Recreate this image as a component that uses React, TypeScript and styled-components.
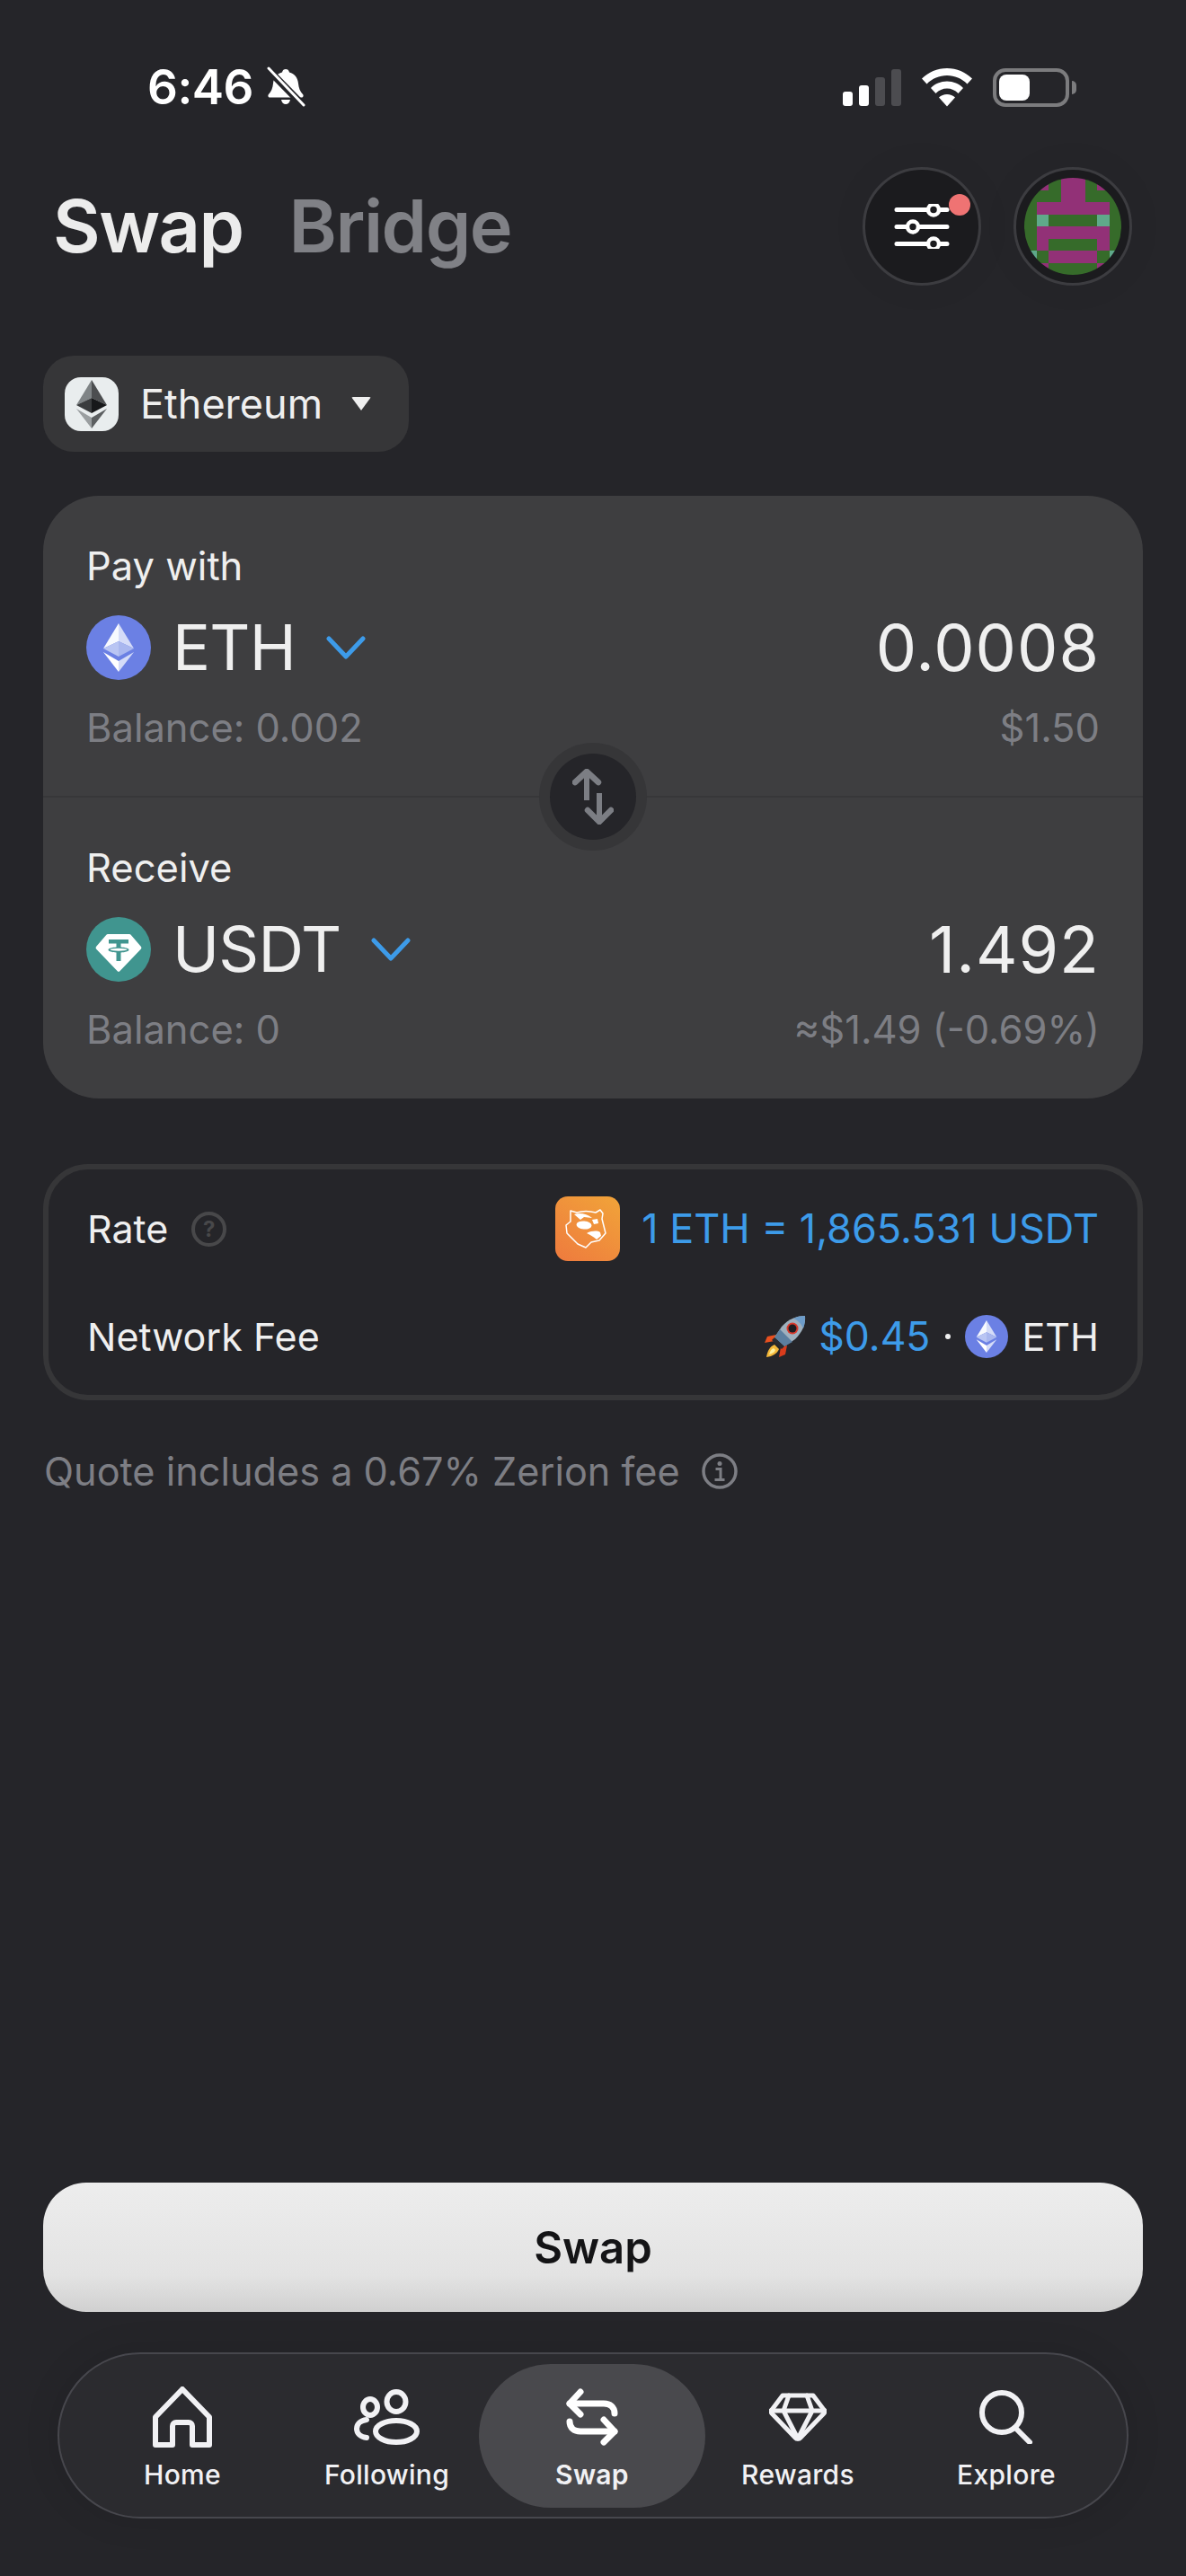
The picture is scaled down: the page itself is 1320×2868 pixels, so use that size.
import React from "react";
import styled, { createGlobalStyle } from "styled-components";

const Global = createGlobalStyle`
  html, body { margin: 0; padding: 0; background: #252529; }
  * { box-sizing: border-box; }
`;

const BLUE = "#3d9be9";
const GREY = "#7d7e84";
const LIGHT = "#efefef";

const Page = styled.div`
  width: 1320px;
  height: 2868px;
  background: #252529;
  display: flex;
  flex-direction: column;
  font-family: Inter, "Liberation Sans", sans-serif;
  color: ${LIGHT};
  overflow: hidden;
`;

/* status bar */
const StatusBar = styled.div`
  height: 186px;
  padding: 8px 122px 0 164px;
  display: flex;
  align-items: center;
  justify-content: space-between;
`;
const TimeGroup = styled.div`
  display: flex;
  align-items: center;
  gap: 14px;
`;
const Time = styled.span`
  font-size: 53px;
  line-height: 44px;
  font-weight: 600;
  color: #fff;
  letter-spacing: -0.5px;
`;
const StatusIcons = styled.div`
  display: flex;
  align-items: center;
  gap: 22px;
`;
const Signal = styled.div`
  display: flex;
  align-items: flex-end;
  gap: 7px;
  height: 42px;
  margin-top: -1px;
`;
const SignalBar = styled.i<{ $h: number; $on?: boolean }>`
  display: block;
  width: 11px;
  height: ${(p) => p.$h}px;
  border-radius: 3px;
  background: ${(p) => (p.$on ? "#fff" : "#4c4c50")};
`;
const Battery = styled.div`
  display: flex;
  align-items: center;
  gap: 3px;
`;
const BatteryBody = styled.div`
  width: 85px;
  height: 43px;
  border: 4px solid #7c7c7e;
  border-radius: 14px;
  padding: 3px;
`;
const BatteryFill = styled.div`
  width: 34px;
  height: 29px;
  border-radius: 8px;
  background: #fff;
`;
const BatteryCap = styled.div`
  width: 5px;
  height: 15px;
  border-radius: 0 5px 5px 0;
  background: #7c7c7e;
`;

/* header */
const Header = styled.div`
  height: 132px;
  padding: 0 60px 0 59px;
  display: flex;
  align-items: center;
  justify-content: space-between;
`;
const Tabs = styled.div`
  display: flex;
  align-items: center;
  gap: 51px;
`;
const Tab = styled.span<{ $active?: boolean }>`
  font-size: 81px;
  line-height: 96px;
  font-weight: 600;
  letter-spacing: -1.5px;
  color: ${(p) => (p.$active ? "#ececec" : "#808186")};
`;
const HeaderActions = styled.div`
  display: flex;
  gap: 36px;
`;
const RoundButton = styled.div`
  position: relative;
  width: 132px;
  height: 132px;
  border-radius: 50%;
  background: #1b1b1e;
  border: 3px solid #3c3c40;
  display: flex;
  align-items: center;
  justify-content: center;
  box-shadow: 0 0 40px rgba(0, 0, 0, 0.06);
`;
const RedDot = styled.span`
  position: absolute;
  top: 27px;
  right: 9px;
  width: 24px;
  height: 24px;
  border-radius: 50%;
  background: #ef7373;
`;

/* chain pill */
const ChainPill = styled.div`
  margin: 78px 0 0 48px;
  width: 407px;
  height: 107px;
  border-radius: 34px;
  background: #363638;
  display: flex;
  align-items: center;
  padding-left: 24px;
`;
const ChainIcon = styled.div`
  width: 60px;
  height: 60px;
  border-radius: 18px;
  background: #e9edee;
  display: flex;
  align-items: center;
  justify-content: center;
`;
const ChainName = styled.span`
  margin-left: 24px;
  font-size: 45px;
  line-height: 54px;
  font-weight: 400;
  color: #efefef;
`;
const Caret = styled.i`
  display: block;
  margin-left: 32px;
  width: 0;
  height: 0;
  border-left: 11px solid transparent;
  border-right: 11px solid transparent;
  border-top: 15px solid #efefef;
  border-radius: 2px;
`;

/* swap card */
const Card = styled.div`
  position: relative;
  margin: 49px 48px 0;
  height: 671px;
  border-radius: 62px;
  background: #3e3e40;
  display: flex;
  flex-direction: column;
`;
const Section = styled.div<{ $first?: boolean }>`
  height: ${(p) => (p.$first ? 336 : 335)}px;
  padding: 51px 48px 0 48px;
  border-bottom: ${(p) => (p.$first ? "2px solid #373739" : "none")};
  display: flex;
  flex-direction: column;
`;
const Label = styled.div`
  font-size: 43.5px;
  line-height: 54px;
  height: 54px;
  color: #efefef;
`;
const TokenRow = styled.div`
  margin-top: 28px;
  height: 72px;
  display: flex;
  align-items: center;
  justify-content: space-between;
`;
const TokenLeft = styled.div`
  display: flex;
  align-items: center;
`;
const TokenName = styled.span`
  margin-left: 24px;
  font-size: 70px;
  line-height: 72px;
  font-weight: 400;
  letter-spacing: -0.8px;
  color: #efefef;
`;
const Chevron = styled.svg`
  margin-left: 34px;
  width: 44px;
  height: 28px;
`;
const Amount = styled.span`
  font-size: 72px;
  line-height: 72px;
  font-weight: 400;
  letter-spacing: 1px;
  color: #efefef;
`;
const SubRow = styled.div`
  margin-top: 26px;
  height: 54px;
  display: flex;
  align-items: center;
  justify-content: space-between;
  font-size: 43.5px;
  line-height: 54px;
  color: ${GREY};
`;
const SwitchButton = styled.div`
  position: absolute;
  left: 552px;
  top: 275px;
  width: 120px;
  height: 120px;
  border-radius: 50%;
  background: #363638;
  display: flex;
  align-items: center;
  justify-content: center;
`;
const SwitchInner = styled.div`
  width: 96px;
  height: 96px;
  border-radius: 50%;
  background: #252529;
  display: flex;
  align-items: center;
  justify-content: center;
`;

/* rate box */
const InfoBox = styled.div`
  margin: 73px 48px 0;
  height: 263px;
  border: 6px solid #363638;
  border-radius: 50px;
  padding: 30px 43px 0 43px;
  display: flex;
  flex-direction: column;
  gap: 48px;
`;
const InfoRow = styled.div`
  height: 72px;
  display: flex;
  align-items: center;
  justify-content: space-between;
  font-size: 43px;
  line-height: 54px;
`;
const InfoLabel = styled.div`
  display: flex;
  align-items: center;
  gap: 26px;
  color: #efefef;
`;
const QuestionMark = styled.div`
  width: 39px;
  height: 39px;
  border: 4px solid #48484a;
  border-radius: 50%;
  color: #48484a;
  font-size: 24px;
  line-height: 31px;
  font-weight: 700;
  text-align: center;
`;
const InfoValue = styled.div`
  display: flex;
  align-items: center;
`;
const ProviderLogo = styled.div`
  width: 72px;
  height: 72px;
  border-radius: 14px;
  margin-right: 24px;
  background: linear-gradient(35deg, #ee7a3e, #f1a439);
  display: flex;
  align-items: center;
  justify-content: center;
`;
const BlueText = styled.span<{ $size: number }>`
  color: ${BLUE};
  font-size: ${(p) => p.$size}px;
`;
const Dot = styled.i`
  display: block;
  width: 6px;
  height: 6px;
  border-radius: 50%;
  background: #efefef;
  margin: 0 16px 0 17px;
`;
const FeeEth = styled.span`
  margin-left: 15px;
  color: #efefef;
`;
const Quote = styled.div`
  margin: 52px 48px 0 49px;
  display: flex;
  align-items: center;
  gap: 24px;
  font-size: 43.25px;
  line-height: 54px;
  color: ${GREY};
`;
const Spacer = styled.div`
  flex: 1;
`;

/* bottom */
const PrimaryButton = styled.div`
  margin: 0 48px;
  height: 144px;
  border-radius: 48px;
  background: linear-gradient(180deg, #ededed 0%, #e3e3e3 72%, #d0d0d0 100%);
  display: flex;
  align-items: center;
  justify-content: center;
  font-size: 49px;
  font-weight: 600;
  color: #141416;
`;
const Nav = styled.div`
  margin: 45px 64px 64px 64px;
  height: 185px;
  border-radius: 93px;
  background: #2b2b2f;
  border: 2px solid #47474d;
  box-shadow: 0 0 40px rgba(0, 0, 0, 0.1);
  display: grid;
  grid-template-columns: 274px 193px 252px 206px 1fr;
  padding: 11px 0 0 0;
  align-items: start;
`;
const NavItem = styled.div<{ $active?: boolean; $shift?: number }>`
  height: 160px;
  border-radius: 80px;
  padding-right: ${(p) => p.$shift ?? 0}px;
  background: ${(p) => (p.$active ? "#49494d" : "transparent")};
  display: flex;
  flex-direction: column;
  align-items: center;
  color: #f1f1f4;
`;
const NavIconBox = styled.div`
  margin-top: 23px;
  height: 72px;
  display: flex;
  align-items: center;
  justify-content: center;
`;
const NavLabel = styled.span<{ $active?: boolean }>`
  margin-top: 10px;
  font-size: 30px;
  line-height: 36px;
  letter-spacing: 0.3px;
  font-weight: ${(p) => (p.$active ? 600 : 500)};
`;

const EthCoin = ({ size }: { size: number }) => (
  <svg width={size} height={size} viewBox="0 0 72 72" style={{ flex: "none" }}>
    <circle cx="36" cy="36" r="36" fill="#6b80e4" />
    <polygon points="36,9 36,29 19,37" fill="#fff" opacity=".95" />
    <polygon points="36,9 36,29 53,37" fill="#d5dcf8" />
    <polygon points="36,29 19,37 36,46" fill="#b9c5f3" />
    <polygon points="36,29 53,37 36,46" fill="#a9b7ef" />
    <polygon points="19,41 36,51 36,63" fill="#fff" />
    <polygon points="53,41 36,51 36,63" fill="#d5dcf8" />
  </svg>
);

const TetherCoin = () => (
  <svg width="72" height="72" viewBox="0 0 72 72" style={{ flex: "none" }}>
    <circle cx="36" cy="36" r="36" fill="#40958f" />
    <path d="M24 19h24a2 2 0 0 1 1.600.800L61 33a2 2 0 0 1 0 2.400L37.500 60a2 2 0 0 1-3 0L11 35.400a2 2 0 0 1 0-2.400l11.400-13.200A2 2 0 0 1 24 19z" fill="#fff" />
    <path d="M25 25h22v4.500h-8.500v4c5 .3 9 1.300 9 3s-4 2.700-9 3V49h-5V39.500c-5-.3-9-1.300-9-3s4-2.700 9-3v-4H25z" fill="#40958f" />
    <ellipse cx="36" cy="36.200" rx="9.500" ry="1.500" fill="#fff" />
  </svg>
);

const ChevronDown = () => (
  <Chevron viewBox="0 0 44 28">
    <path d="M3 4l19 20L41 4" fill="none" stroke={BLUE} strokeWidth="5" strokeLinecap="round" strokeLinejoin="round" />
  </Chevron>
);

const AVATAR = ["GMGMMGMG", "GGGMMGGG", "GMMMMMMG", "GTGGGGTG", "GMMMMMMG", "GMGGGGMG", "TGMMMMGT", "GMGGGGMG"];
const AV_COL: Record<string, string> = { G: "#366b2a", M: "#923177", T: "#5fa98a" };

const Avatar = () => (
  <svg width="108" height="108" viewBox="0 0 8 8" shapeRendering="crispEdges">
    <defs>
      <clipPath id="avClip">
        <circle cx="4" cy="4" r="4" />
      </clipPath>
    </defs>
    <g clipPath="url(#avClip)">
      {AVATAR.flatMap((row, y) =>
        row.split("").map((c, x) => <rect key={`${x}-${y}`} x={x} y={y} width="1.010" height="1.010" fill={AV_COL[c]} />)
      )}
    </g>
  </svg>
);

const Rocket = () => (
  <svg width="48" height="48" viewBox="0 0 48 48" style={{ marginRight: 13 }}>
    <path d="M14 22L4 24l-3 7 11-2z" fill="#e8501f" />
    <path d="M26 34l-2 10-7 3 2-11z" fill="#d93c1c" />
    <path d="M12 33c-5 2-8 7-9 14 7-1 12-4 14-9z" fill="#f6b93a" />
    <path d="M11 37c-3 1-4 4-5 7 3-1 6-2 7-5z" fill="#fdf0a0" />
    <path d="M46 1c-9 0-18 3-26 12l-8 12 11 10 12-8c8-8 12-17 11-26z" fill="#9fb0bd" />
    <path d="M46 1c-5 0-9 1-13 3 5 2 9 6 11 11 2-5 2-10 2-14z" fill="#6d9cc9" />
    <path d="M12 25l6-9 14 14-9 5z" fill="#5c7f9f" />
    <circle cx="32" cy="15" r="6.500" fill="#d8392b" />
    <circle cx="32" cy="15" r="4.500" fill="#1c1c20" />
    <path d="M12 25l11 10-3 3-11-10z" fill="#2b2b30" />
  </svg>
);

const Panther = () => (
  <svg width="50" height="50" viewBox="0 0 50 50">
    <path d="M6 5l7 2c6-2 14-2 21 0l5-3 3 4-1 6 4 16-7 8-9 2-6 6-9-4-12-12-1-9 5-4z" fill="none" stroke="#fff" strokeWidth="1.500" strokeLinejoin="round" />
    <path d="M10 9c6-2 14-1 20 4l-9-1-4 3z" fill="#fff" />
    <ellipse cx="21" cy="21" rx="8.500" ry="4.500" fill="#fff" transform="rotate(5 21 21)" />
    <path d="M24 30c6-3 12-3 15-1l1 4-5 4c-3-3-7-5-11-7z" fill="#fff" />
    <path d="M30 15l6-1 1 5-5 1z" fill="#fff" />
  </svg>
);

export default function App() {
  return (
    <Page>
      <Global />
      <StatusBar>
        <TimeGroup>
          <Time>6:46</Time>
          <svg width="44" height="46" viewBox="0 0 44 46">
            <path d="M22 3c2 0 3.500 1 4 3.500 6 1.500 9.500 6.500 10 12.500.5 5 2 9 5 12 1.200 1.200.5 3.500-1 3.500H4c-1.500 0-2.200-2.300-1-3.500 3-3 4.500-7 5-12 .5-6 4-11 10-12.500C18.500 4 20 3 22 3z" fill="#fff" />
            <path d="M17 37h10c-.5 3-2.500 5-5 5s-4.500-2-5-5z" fill="#fff" />
            <path d="M2 3l40 41" stroke="#252529" strokeWidth="8" />
            <path d="M3 2l39 41" stroke="#fff" strokeWidth="3" strokeLinecap="round" />
          </svg>
        </TimeGroup>
        <StatusIcons>
          <Signal>
            <SignalBar $h={16} $on />
            <SignalBar $h={23} $on />
            <SignalBar $h={32} />
            <SignalBar $h={41} />
          </Signal>
          <svg width="58" height="43" viewBox="0 0 58 43">
            <path d="M29 0C18 0 8.500 4.300 1 11.500l5.500 6C12.500 11.500 20.500 8 29 8s16.500 3.500 22.500 9.500l5.500-6C49.500 4.300 40 0 29 0z" fill="#fff" />
            <path d="M29 14.500c-7 0-13.500 2.800-18 7.400l5.500 6C20 24.500 24.300 22.500 29 22.500s9 2 12.500 5.400l5.500-6c-4.500-4.600-11-7.400-18-7.400z" fill="#fff" />
            <path d="M29 29c-3.500 0-6.700 1.300-9 3.600L29 42.500l9-9.900C35.700 30.300 32.500 29 29 29z" fill="#fff" />
          </svg>
          <Battery>
            <BatteryBody>
              <BatteryFill />
            </BatteryBody>
            <BatteryCap />
          </Battery>
        </StatusIcons>
      </StatusBar>

      <Header>
        <Tabs>
          <Tab $active>Swap</Tab>
          <Tab>Bridge</Tab>
        </Tabs>
        <HeaderActions>
          <RoundButton>
            <svg width="62" height="50" viewBox="0 0 62 50">
              <g stroke="#fff" strokeWidth="5" strokeLinecap="round" fill="none">
                <path d="M3 6.500h56M3 25.500h56M3 44.500h56" />
              </g>
              <g stroke="#fff" strokeWidth="4.500" fill="#1b1b1e">
                <circle cx="44" cy="6.500" r="6" />
                <circle cx="21" cy="25.500" r="6" />
                <circle cx="44" cy="44.500" r="6" />
              </g>
            </svg>
            <RedDot />
          </RoundButton>
          <RoundButton>
            <Avatar />
          </RoundButton>
        </HeaderActions>
      </Header>

      <ChainPill>
        <ChainIcon>
          <svg width="36" height="56" viewBox="0 0 36 56">
            <polygon points="18,1 18,21 1,29" fill="#7f8486" />
            <polygon points="18,1 18,21 35,29" fill="#4c4e50" />
            <polygon points="18,21 1,29 18,38" fill="#3a3c3e" />
            <polygon points="18,21 35,29 18,38" fill="#17181a" />
            <polygon points="1,33 18,43 18,55" fill="#9a9ea0" />
            <polygon points="35,33 18,43 18,55" fill="#5c5f61" />
          </svg>
        </ChainIcon>
        <ChainName>Ethereum</ChainName>
        <Caret />
      </ChainPill>

      <Card>
        <Section $first>
          <Label>Pay with</Label>
          <TokenRow>
            <TokenLeft>
              <EthCoin size={72} />
              <TokenName>ETH</TokenName>
              <ChevronDown />
            </TokenLeft>
            <Amount>0.0008</Amount>
          </TokenRow>
          <SubRow>
            <span>Balance: 0.002</span>
            <span>$1.50</span>
          </SubRow>
        </Section>
        <Section>
          <Label>Receive</Label>
          <TokenRow>
            <TokenLeft>
              <TetherCoin />
              <TokenName>USDT</TokenName>
              <ChevronDown />
            </TokenLeft>
            <Amount>1.492</Amount>
          </TokenRow>
          <SubRow>
            <span>Balance: 0</span>
            <span>≈$1.49 (-0.69%)</span>
          </SubRow>
        </Section>
        <SwitchButton>
          <SwitchInner>
            <svg width="46" height="62" viewBox="0 0 46 62">
              <g fill="none" stroke="#7c7e84" strokeWidth="6.500" strokeLinejoin="round" strokeLinecap="round">
                <path d="M3 15L16 3l13 12" />
                <path d="M17 46l13 13 13-13" />
              </g>
              <path d="M13 3h6v32h-6zM27 27h6v30h-6z" fill="#7c7e84" />
            </svg>
          </SwitchInner>
        </SwitchButton>
      </Card>

      <InfoBox>
        <InfoRow>
          <InfoLabel>
            <span>Rate</span>
            <QuestionMark>?</QuestionMark>
          </InfoLabel>
          <InfoValue>
            <ProviderLogo>
              <Panther />
            </ProviderLogo>
            <BlueText $size={45}>1 ETH = 1,865.531 USDT</BlueText>
          </InfoValue>
        </InfoRow>
        <InfoRow>
          <InfoLabel>
            <span>Network Fee</span>
          </InfoLabel>
          <InfoValue>
            <Rocket />
            <BlueText $size={44.5}>$0.45</BlueText>
            <Dot />
            <EthCoin size={48} />
            <FeeEth>ETH</FeeEth>
          </InfoValue>
        </InfoRow>
      </InfoBox>

      <Quote>
        <span>Quote includes a 0.67% Zerion fee</span>
        <svg width="40" height="40" viewBox="0 0 40 40">
          <circle cx="20" cy="20" r="18" fill="none" stroke={GREY} strokeWidth="3.500" />
          <circle cx="20" cy="11.500" r="2.500" fill={GREY} />
          <path d="M15.500 17.500h5.500v11.500M14.500 29.500h11" fill="none" stroke={GREY} strokeWidth="3" />
        </svg>
      </Quote>

      <Spacer />

      <PrimaryButton>Swap</PrimaryButton>

      <Nav>
        <NavItem>
          <NavIconBox>
            <svg width="68" height="68" viewBox="0 0 68 68" fill="none" stroke="currentColor" strokeWidth="6" strokeLinejoin="round">
              <path d="M34 3L4 34v31h19V44a4 4 0 0 1 4-4h14a4 4 0 0 1 4 4v21h19V34z" />
            </svg>
          </NavIconBox>
          <NavLabel>Home</NavLabel>
        </NavItem>
        <NavItem $shift={12}>
          <NavIconBox>
            <svg width="74" height="62" viewBox="0 0 74 62" fill="none" stroke="currentColor" strokeWidth="6" strokeLinecap="round">
              <ellipse cx="18" cy="20" rx="8" ry="9" />
              <ellipse cx="47" cy="14" rx="10.500" ry="11" />
              <ellipse cx="47" cy="47" rx="23" ry="12" />
              <path d="M14 34C7 35 3 39 3 44s4 9 11 10" />
            </svg>
          </NavIconBox>
          <NavLabel>Following</NavLabel>
        </NavItem>
        <NavItem $active>
          <NavIconBox>
            <svg width="58" height="64" viewBox="0 0 58 64" fill="none" stroke="#fff" strokeWidth="7" strokeLinecap="round" strokeLinejoin="round">
              <path d="M16 4L4 17l12 12" />
              <path d="M4 17h38c7 0 12 4 12 11" />
              <path d="M42 35l12 13-12 12" />
              <path d="M54 48H16C9 48 4 44 4 37" />
            </svg>
          </NavIconBox>
          <NavLabel $active>Swap</NavLabel>
        </NavItem>
        <NavItem>
          <NavIconBox>
            <svg width="64" height="54" viewBox="0 0 64 54" fill="none" stroke="currentColor" strokeWidth="5" strokeLinejoin="round" strokeLinecap="round">
              <path d="M15 3h34l12 16a3 3 0 0 1 0 4L35 50a4 4 0 0 1-6 0L3 23a3 3 0 0 1 0-4z" />
              <path d="M2 20h60M22 3l-6 17 16 31 16-31-6-17" />
            </svg>
          </NavIconBox>
          <NavLabel>Rewards</NavLabel>
        </NavItem>
        <NavItem $shift={5}>
          <NavIconBox>
            <svg width="60" height="60" viewBox="0 0 60 60" fill="none" stroke="currentColor" strokeWidth="6" strokeLinecap="round">
              <circle cx="25" cy="25" r="22" />
              <path d="M40 42l16 16" />
            </svg>
          </NavIconBox>
          <NavLabel>Explore</NavLabel>
        </NavItem>
      </Nav>
    </Page>
  );
}
